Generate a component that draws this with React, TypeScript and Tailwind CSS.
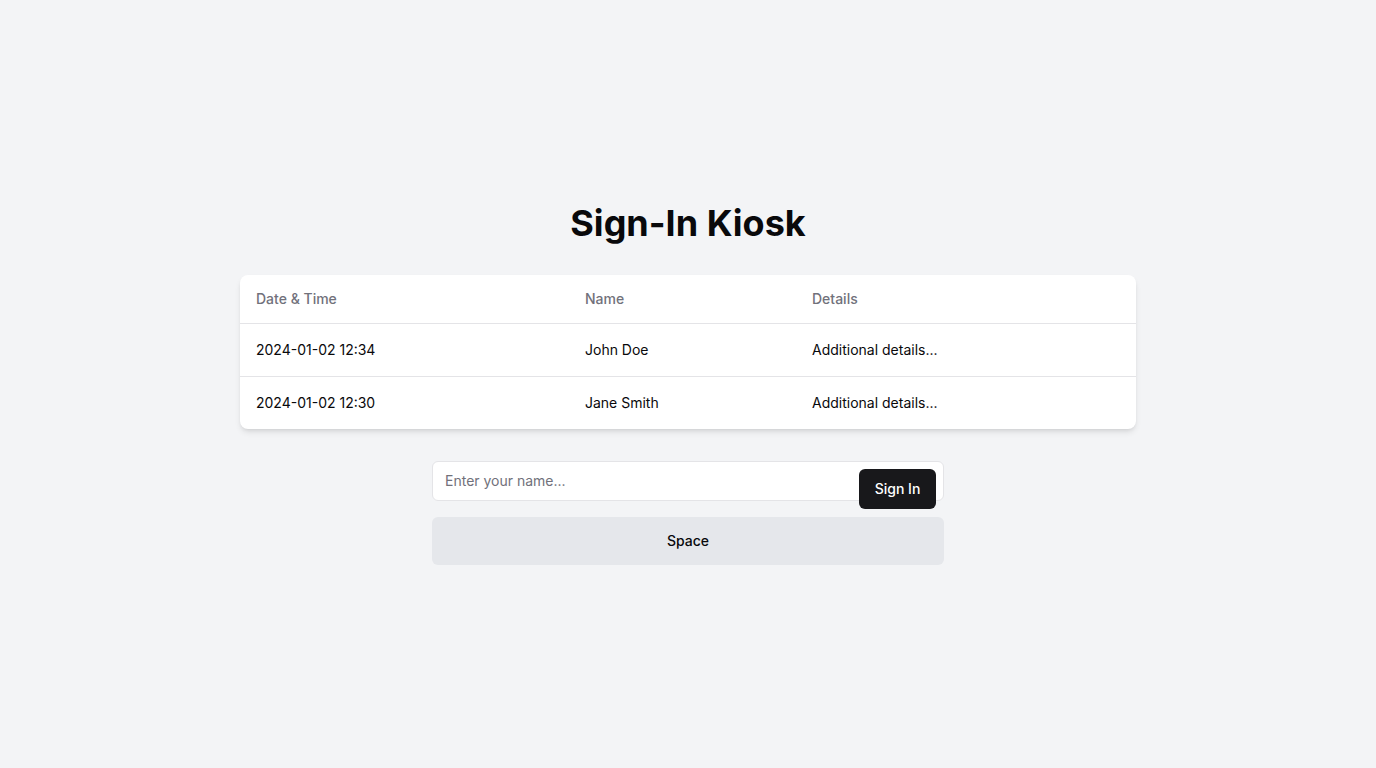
const rows = [
  { time: "2024-01-02 12:34", name: "John Doe", details: "Additional details..." },
  { time: "2024-01-02 12:30", name: "Jane Smith", details: "Additional details..." },
];

const App = () => {
  return (
    <div className="min-h-screen bg-gray-100 flex flex-col items-center justify-center px-4 font-['Inter',sans-serif] text-zinc-950">
      <h1 className="text-4xl font-bold mb-8">Sign-In Kiosk</h1>
      <div className="w-full max-w-4xl bg-white rounded-lg shadow-md overflow-hidden">
        <table className="w-full text-sm text-left">
          <thead>
            <tr className="border-b border-zinc-200">
              <th className="w-[329px] h-12 px-4 font-medium text-zinc-500">Date &amp; Time</th>
              <th className="w-[227px] h-12 px-4 font-medium text-zinc-500">Name</th>
              <th className="h-12 px-4 font-medium text-zinc-500">Details</th>
            </tr>
          </thead>
          <tbody>
            {rows.map((r, i) => (
              <tr key={i} className={i < rows.length - 1 ? "border-b border-zinc-200" : ""}>
                <td className="px-4 h-[53px]">{r.time}</td>
                <td className="px-4 h-[53px]">{r.name}</td>
                <td className="px-4 h-[53px]">{r.details}</td>
              </tr>
            ))}
          </tbody>
        </table>
      </div>
      <div className="w-full max-w-lg mt-8 flex flex-col gap-4">
        <div className="relative">
          <input
            type="text"
            placeholder="Enter your name..."
            className="w-full h-10 px-3 pb-px text-sm bg-white border border-zinc-200 rounded-md placeholder:text-zinc-500 outline-none"
          />
          <button className="absolute right-2 top-2 h-10 w-[77px] rounded-md bg-zinc-900 text-white text-sm font-medium">
            Sign In
          </button>
        </div>
        <button className="w-full h-12 rounded-md bg-gray-200 text-sm font-medium">Space</button>
      </div>
    </div>
  );
};

export default App;
